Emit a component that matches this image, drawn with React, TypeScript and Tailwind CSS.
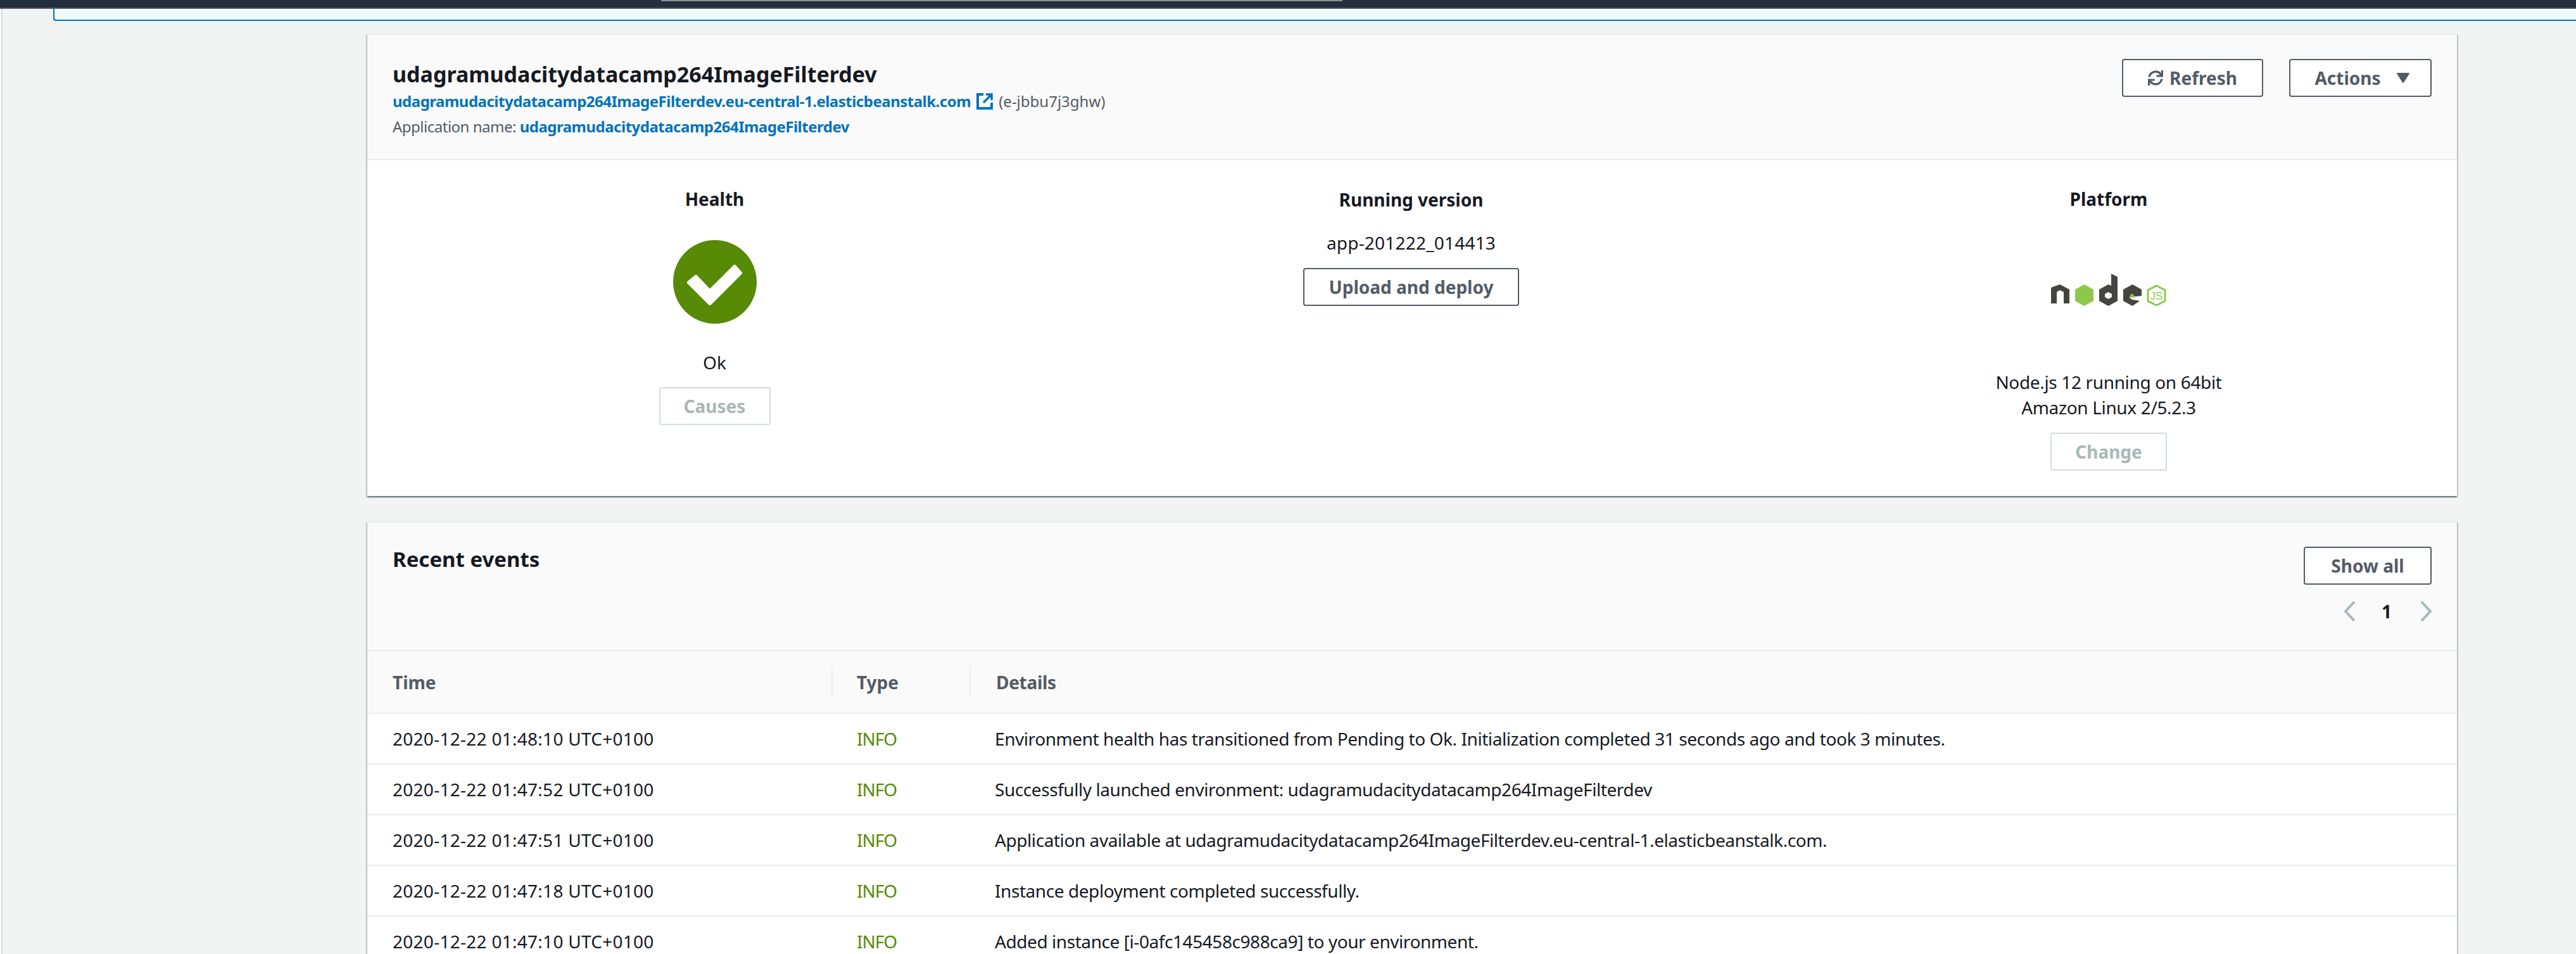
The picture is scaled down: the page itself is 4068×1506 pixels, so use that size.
import { FaSync } from "react-icons/fa";

const events = [
  ["2020-12-22 01:48:10 UTC+0100", "Environment health has transitioned from Pending to Ok. Initialization completed 31 seconds ago and took 3 minutes."],
  ["2020-12-22 01:47:52 UTC+0100", "Successfully launched environment: udagramudacitydatacamp264ImageFilterdev"],
  ["2020-12-22 01:47:51 UTC+0100", "Application available at udagramudacitydatacamp264ImageFilterdev.eu-central-1.elasticbeanstalk.com."],
  ["2020-12-22 01:47:18 UTC+0100", "Instance deployment completed successfully."],
  ["2020-12-22 01:47:10 UTC+0100", "Added instance [i-0afc145458c988ca9] to your environment."],
];

const cardClass =
  "bg-white border-t-2 border-[#eaeded] shadow-[0_2px_2px_0_rgba(0,28,36,0.45),2px_2px_2px_0_rgba(0,28,36,0.15),-2px_2px_2px_0_rgba(0,28,36,0.15)]";

function Button({ children, className }: { children: React.ReactNode; className: string }) {
  return (
    <button className={`h-[60px] flex items-center justify-center gap-[10px] rounded-[4px] border-2 border-[#545b64] bg-white text-[28px] font-bold text-[#545b64] ${className}`}>
      {children}
    </button>
  );
}

function DisabledButton({ children, className }: { children: React.ReactNode; className: string }) {
  return (
    <button className={`h-[60px] flex items-center justify-center rounded-[4px] border-2 border-[#d5dbdb] bg-white text-[28px] font-bold text-[#aab7b8] ${className}`}>
      {children}
    </button>
  );
}

function ExternalIcon() {
  return (
    <svg viewBox="0 0 28 28" className="w-[28px] h-[28px] shrink-0" fill="none" stroke="#0073bb">
      <path d="M12 3H3v22h22v-9" strokeWidth="4" />
      <path d="M12 16 24 4M16 3h9v9" strokeWidth="3.5" />
    </svg>
  );
}

function HealthIcon() {
  return (
    <svg viewBox="0 0 132 132" className="w-[132px] h-[132px]">
      <circle cx="66" cy="66" r="66" fill="#578a05" />
      <path
        d="M36 58 58 81 97 42 106 52 58 100 25 67Z"
        fill="#fff"
        stroke="#fff"
        strokeWidth="6"
        strokeLinejoin="round"
      />
    </svg>
  );
}

function NodeLogo() {
  return (
    <svg viewBox="0 0 182 51" className="w-[182px] h-[51px]">
      <path d="M0 22 14 17 29 25V47H20V29L14 26 9 29V47H0Z" fill="#44453c" />
      <path d="M52.5 17 67 25V43L52.5 51 38 43V25Z" fill="#8cc84b" />
      <path d="M95 0 105 5V43L90.5 51 76 43V25L90.5 17 95 19ZM90.5 29 85 32V37L90.5 40 96 37V32Z" fill="#44453c" fillRule="evenodd" />
      <path d="M128.5 17 143 25V35L123 37 128 41 140 43 128.5 51 114 43V25Z" fill="#44453c" />
      <circle cx="128" cy="35" r="3" fill="#8cc84b" />
      <path d="M166.5 19 180 26V43L166.5 50 153 43V26Z" fill="none" stroke="#8cc84b" strokeWidth="3" />
      <text x="166.5" y="41" textAnchor="middle" fontSize="17" fill="#8cc84b" fontFamily="Liberation Sans, sans-serif">JS</text>
    </svg>
  );
}

export default function App() {
  return (
    <div className="relative h-[1506px] w-full overflow-hidden bg-[#f2f3f3] font-['Noto_Sans',sans-serif] text-[28px] leading-[40px] text-[#16191f]">
      <div className="relative h-[14px] bg-[#232f3e] border-b-2 border-[#545b64]">
        <div className="absolute left-[1044px] top-0 h-[2px] w-[1076px] bg-[#879596]" />
      </div>
      <div className="flex">
        <div className="w-[4px] h-[1492px] bg-[#fafafa] border-r-2 border-[#d5dbdb]" />
        <div className="flex-1 min-w-0">
          <div className="ml-[80px] h-[19px] rounded-bl-[4px] border-l-2 border-b-2 border-[#0073bb] bg-[#f1faff]" />
          <div className="ml-[576px] w-[3300px] mt-[20px]">
            <section className={cardClass}>
              <div className="flex justify-between bg-[#fafafa] border-b-2 border-[#eaeded] h-[198px] pl-[40px] pr-[40px]">
                <div>
                  <h1 className="mt-[40px] text-[34px] leading-[44px] font-bold">udagramudacitydatacamp264ImageFilterdev</h1>
                  <div className="mt-[1px] flex items-center gap-[8px] text-[24px] leading-[40px] text-[#545b64]">
                    <a className="font-bold text-[#0073bb] tracking-[-0.5px]">udagramudacitydatacamp264ImageFilterdev.eu-central-1.elasticbeanstalk.com</a>
                    <ExternalIcon />
                    <span>(e-jbbu7j3ghw)</span>
                  </div>
                  <div className="text-[24px] leading-[40px] text-[#545b64] tracking-[-0.5px]">
                    Application name: <a className="font-bold text-[#0073bb]">udagramudacitydatacamp264ImageFilterdev</a>
                  </div>
                </div>
                <div className="mt-[38px] flex gap-[41px]">
                  <Button className="w-[223px]">
                    <FaSync className="w-[24px] h-[24px]" />
                    Refresh
                  </Button>
                  <Button className="w-[225px] gap-[24px] pl-[6px]">
                    Actions
                    <svg viewBox="0 0 22 18" className="w-[22px] h-[18px]" fill="#545b64" stroke="#545b64" strokeWidth="2" strokeLinejoin="round">
                      <path d="M2 2h18l-9 14z" />
                    </svg>
                  </Button>
                </div>
              </div>
              <div className="grid grid-cols-3 h-[530px] text-center">
                <div className="flex flex-col items-center pt-[41px] pr-[3px]">
                  <h2 className="font-bold">Health</h2>
                  <div className="mt-[45px]"><HealthIcon /></div>
                  <div className="mt-[41px]">Ok</div>
                  <DisabledButton className="mt-[19px] w-[176px]">Causes</DisabledButton>
                </div>
                <div className="flex flex-col items-center pt-[42px] pr-[3px]">
                  <h2 className="font-bold">Running version</h2>
                  <div className="mt-[28px] tracking-[0.2px]">app-201222_014413</div>
                  <Button className="mt-[20px] w-[341px]">Upload and deploy</Button>
                </div>
                <div className="flex flex-col items-center pt-[41px]">
                  <h2 className="font-bold">Platform</h2>
                  <div className="mt-[98px]"><NodeLogo /></div>
                  <div className="mt-[100px] tracking-[-0.35px]">Node.js 12 running on 64bit<br />Amazon Linux 2/5.2.3</div>
                  <DisabledButton className="mt-[20px] w-[184px]">Change</DisabledButton>
                </div>
              </div>
            </section>

            <section className={`${cardClass} mt-[40px] h-[800px]`}>
              <div className="flex justify-between bg-[#fafafa] border-b-2 border-[#eaeded] h-[203px] pl-[40px] pr-[40px]">
                <h2 className="mt-[36px] text-[33px] leading-[44px] font-bold">Recent events</h2>
                <div className="flex flex-col items-end">
                  <Button className="mt-[38px] w-[202px]">Show all</Button>
                  <div className="mt-[20px] flex items-center h-[44px] text-[#aab7b8]">
                    <svg viewBox="0 0 18 32" className="w-[18px] h-[32px]" fill="none" stroke="currentColor" strokeWidth="4"><path d="M16 1 2 16l14 15" /></svg>
                    <span className="ml-[41px] mr-[45px] font-bold text-[#16191f]">1</span>
                    <svg viewBox="0 0 18 32" className="w-[18px] h-[32px]" fill="none" stroke="currentColor" strokeWidth="4"><path d="M2 1l14 15L2 31" /></svg>
                  </div>
                </div>
              </div>
              <div className="grid grid-cols-[735px_218px_1fr] h-[99px] items-center bg-[#fafafa] border-b-2 border-[#eaeded] font-bold text-[#545b64]">
                <div className="pl-[40px] border-r-2 border-[#eaeded] h-[48px] leading-[48px]">Time</div>
                <div className="pl-[38px] border-r-2 border-[#eaeded] h-[48px] leading-[48px]">Type</div>
                <div className="pl-[40px] tracking-[-0.3px]">Details</div>
              </div>
              {events.map(([time, details]) => (
                <div key={time} className="grid grid-cols-[735px_218px_1fr] h-[80px] items-center border-b-2 border-[#eaeded]">
                  <div className="pl-[40px] tracking-[0.27px]">{time}</div>
                  <div className="pl-[38px] text-[#578a05] tracking-[-1px]">INFO</div>
                  <div className="pl-[38px] tracking-[-0.43px]">{details}</div>
                </div>
              ))}
            </section>
          </div>
        </div>
      </div>
    </div>
  );
}
